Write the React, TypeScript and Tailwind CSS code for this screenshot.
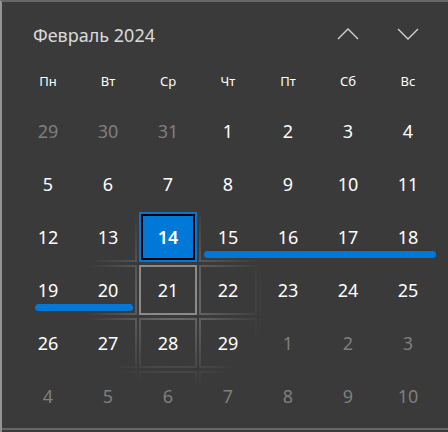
import React from 'react'

type Day = { n: number; other?: boolean }

const weeks: Day[][] = [
  [{ n: 29, other: true }, { n: 30, other: true }, { n: 31, other: true }, { n: 1 }, { n: 2 }, { n: 3 }, { n: 4 }],
  [{ n: 5 }, { n: 6 }, { n: 7 }, { n: 8 }, { n: 9 }, { n: 10 }, { n: 11 }],
  [{ n: 12 }, { n: 13 }, { n: 14 }, { n: 15 }, { n: 16 }, { n: 17 }, { n: 18 }],
  [{ n: 19 }, { n: 20 }, { n: 21 }, { n: 22 }, { n: 23 }, { n: 24 }, { n: 25 }],
  [{ n: 26 }, { n: 27 }, { n: 28 }, { n: 29 }, { n: 1, other: true }, { n: 2, other: true }, { n: 3, other: true }],
  [4, 5, 6, 7, 8, 9, 10].map(n => ({ n, other: true })),
]

const weekdays = ['Пн', 'Вт', 'Ср', 'Чт', 'Пт', 'Сб', 'Вс']

// mouse sits on 21, grid-relative coords
const pointer = { x: 156, y: 192 }

function Chevron({ up }: { up?: boolean }) {
  return (
    <svg width="22" height="12" viewBox="0 0 22 12" className="mb-[3px]">
      <polyline
        points={up ? '1,11 11,1 21,11' : '1,1 11,11 21,1'}
        fill="none"
        stroke="#d4d4d4"
        strokeWidth="1.3"
      />
    </svg>
  )
}

function Cell({ day, r, c }: { day: Day; r: number; c: number }) {
  const selected = r === 2 && c === 2
  const hovered = r === 3 && c === 2

  if (selected) {
    return (
      <div className="border-2 border-[#0078d7]">
        <div className="h-full border-2 border-black bg-[#0078d7] flex items-center justify-center text-[18px] font-semibold text-white">
          {day.n}
        </div>
      </div>
    )
  }

  const gx = pointer.x - c * 60
  const gy = pointer.y - r * 53
  const style = hovered
    ? undefined
    : { background: `radial-gradient(circle 92px at ${gx}px ${gy}px, rgba(255,255,255,0.3), rgba(255,255,255,0) 100%)` }

  return (
    <div className={`p-[2px] ${hovered ? 'bg-[#8a8a8a]' : ''}`} style={style}>
      <div
        className={`h-full bg-[#3a3a3a] flex items-center justify-center text-[18px] ${
          day.other ? 'text-[#7f7f7f]' : 'text-white'
        }`}
      >
        {day.n}
      </div>
    </div>
  )
}

export default function App() {
  return (
    <div className="w-[448px] h-[432px] flex flex-col bg-[#3a3a3a] border-l-2 border-l-[#949494] border-t-2 border-t-[#676767] font-['Noto_Sans',sans-serif]">
      <div className="pl-[17px]">
        {/* Header */}
        <div className="w-[418px] h-[66px] flex items-center">
          <div className="flex-1 pl-[14px] text-[18px] text-[#dadada]">Февраль 2024</div>
          <div className="w-[58px] flex justify-center">
            <Chevron up />
          </div>
          <div className="w-[58px] ml-[2px] flex justify-center">
            <Chevron />
          </div>
        </div>

        {/* Weekdays */}
        <div className="w-[418px] h-[28px] grid grid-cols-[repeat(7,58px)] gap-x-[2px] items-center">
          {weekdays.map(w => (
            <div key={w} className="text-center text-[13px] text-white">{w}</div>
          ))}
        </div>

        {/* Days */}
        <div className="relative mt-[10px] w-[418px] grid grid-cols-[repeat(7,58px)] auto-rows-[50px] gap-x-[2px] gap-y-[3px]">
          {weeks.map((row, r) =>
            row.map((d, c) => <Cell key={`${r}-${c}`} day={d} r={r} c={c} />)
          )}
          {/* event bars */}
          <div className="absolute left-[185px] top-[145px] w-[232px] h-[7px] rounded-full bg-[#0078d7]" />
          <div className="absolute left-[16px] top-[198px] w-[98px] h-[7px] rounded-full bg-[#0078d7]" />
        </div>
      </div>

      <div className="mt-auto mb-[2px] h-[2px] bg-[#676767]" />
    </div>
  )
}
